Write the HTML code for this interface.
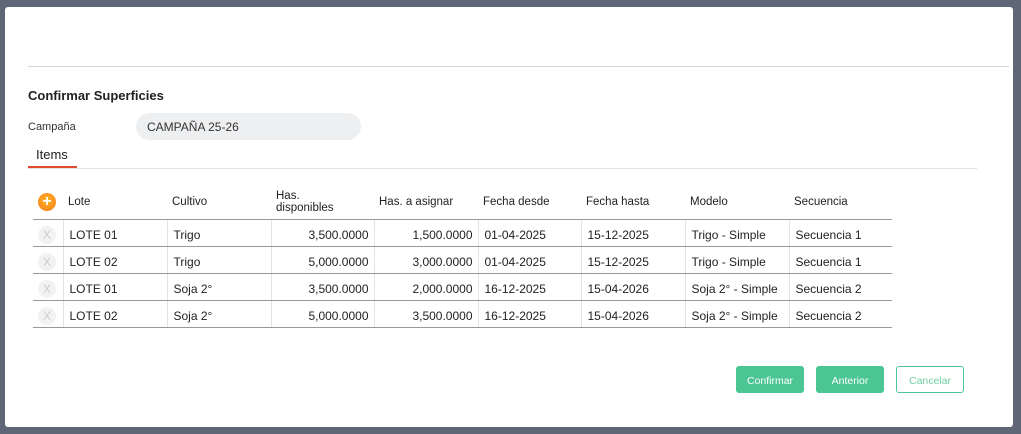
<!DOCTYPE html>
<html><head><meta charset="utf-8"><style>
*{box-sizing:border-box;margin:0;padding:0}
body{width:1021px;height:434px;background:#5f6777;font-family:"Liberation Sans",sans-serif;position:relative;overflow:hidden;color:#222}
.modal{position:absolute;left:5px;top:7px;width:1008px;height:420px;background:#fff;border-radius:3px}
.abs{position:absolute}
.hr{left:23px;top:59px;width:981px;height:1px;background:#d4d4d4}
h3{position:absolute;left:23px;top:81px;font-size:13px;font-weight:bold;color:#222}
.lbl{left:23px;top:114px;font-size:11px;color:#333}
.sel{left:131px;top:106px;width:225px;height:27px;background:#eeeff1;border-radius:14px;font-size:12px;padding:7px 0 0 11px;color:#333}
.tab{left:31px;top:140px;font-size:13px;color:#222}
.tabl{left:23px;top:159px;width:49px;height:2px;background:#e04a2e}
.tabline{left:23px;top:161px;width:949px;height:1px;background:#e0e0e0}
table{position:absolute;left:28px;top:178px;border-collapse:collapse;font-size:12px}
th{font-weight:normal;text-align:left;height:34px;padding:0 5px;vertical-align:middle;line-height:12px;border-bottom:1px solid #999;font-size:11.5px}
td{height:27px;padding:4px 6px 0;border-bottom:1px solid #999;border-left:1px solid #e3e3e3}
td:first-child{border-left:none}
td.r{text-align:right;padding-right:5px}
.x{display:inline-block;width:18px;height:18px;border-radius:50%;background:#f2f2f2;color:#ccc;font-size:12px;text-align:center;line-height:18px;vertical-align:middle}
.plus{display:inline-block;width:18px;height:18px;border-radius:50%;background:radial-gradient(circle at 50% 40%,#ffb52b,#f57a14);color:#fff;font-weight:bold;text-align:center;line-height:18px;font-size:16px}
.btn{position:absolute;top:359px;height:27px;width:68px;border-radius:3px;font-size:10.5px;text-align:center;line-height:30px}
.g{background:#4bc592;color:#fff}
.o{border:1px solid #4bc592;color:#6fcfa6;line-height:28px;background:#fff}
</style></head><body>
<div class="modal">
<div class="abs hr"></div>
<h3>Confirmar Superficies</h3>
<div class="abs lbl">Campaña</div>
<div class="abs sel">CAMPAÑA 25-26</div>
<div class="abs tab">Items</div>
<div class="abs tabline"></div>
<div class="abs tabl"></div>
<table>
<tr><th style="width:30px;padding-left:5px"><span class="plus">+</span></th><th style="width:104px">Lote</th><th style="width:104px">Cultivo</th><th style="width:103px">Has.<br>disponibles</th><th style="width:104px">Has. a asignar</th><th style="width:103px">Fecha desde</th><th style="width:104px">Fecha hasta</th><th style="width:104px">Modelo</th><th style="width:103px">Secuencia</th></tr>
<tr><td style="padding-left:5px"><span class="x">X</span></td><td>LOTE 01</td><td>Trigo</td><td class="r">3,500.0000</td><td class="r">1,500.0000</td><td>01-04-2025</td><td>15-12-2025</td><td>Trigo - Simple</td><td>Secuencia 1</td></tr>
<tr><td style="padding-left:5px"><span class="x">X</span></td><td>LOTE 02</td><td>Trigo</td><td class="r">5,000.0000</td><td class="r">3,000.0000</td><td>01-04-2025</td><td>15-12-2025</td><td>Trigo - Simple</td><td>Secuencia 1</td></tr>
<tr><td style="padding-left:5px"><span class="x">X</span></td><td>LOTE 01</td><td>Soja 2°</td><td class="r">3,500.0000</td><td class="r">2,000.0000</td><td>16-12-2025</td><td>15-04-2026</td><td>Soja 2° - Simple</td><td>Secuencia 2</td></tr>
<tr><td style="padding-left:5px"><span class="x">X</span></td><td>LOTE 02</td><td>Soja 2°</td><td class="r">5,000.0000</td><td class="r">3,500.0000</td><td>16-12-2025</td><td>15-04-2026</td><td>Soja 2° - Simple</td><td>Secuencia 2</td></tr>
</table>
<div class="btn g" style="left:731px">Confirmar</div>
<div class="btn g" style="left:811px">Anterior</div>
<div class="btn o" style="left:891px">Cancelar</div>
</div>
</body></html>
